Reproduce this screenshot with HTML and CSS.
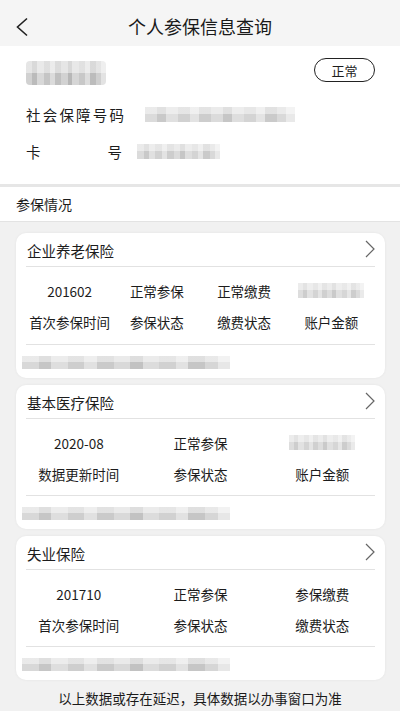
FILE: index.html
```html
<!DOCTYPE html>
<html lang="zh">
<head>
<meta charset="utf-8">
<link rel="stylesheet" href="styles.css">
</head>
<body>
<div class="page">
  <header class="topbar">
    <svg class="back" width="14" height="20" viewBox="0 0 14 20"><path d="M12 1.5 L2.5 10 L12 18.5" fill="none" stroke="#222" stroke-width="1.6"/></svg>
    <h1 class="title">个人参保信息查询</h1>
  </header>

  <section class="info">
    <div class="info-top">
      <div class="mosaic m-name"></div>
      <div class="pill">正常</div>
    </div>
    <div class="info-row first-row">
      <span class="info-label">社会保障号码</span>
      <div class="mosaic m-ssn"></div>
    </div>
    <div class="info-row">
      <span class="info-label card-label"><span>卡</span><span>号</span></span>
      <div class="mosaic m-card"></div>
    </div>
  </section>

  <div class="section-head">参保情况</div>

  <main class="cards">
    <div class="card">
      <div class="card-head">
        <span class="card-title">企业养老保险</span>
        <svg class="chev" width="10" height="18" viewBox="0 0 10 18"><path d="M1 1 L9 9 L1 17" fill="none" stroke="#666" stroke-width="1.2"/></svg>
      </div>
      <div class="grid g4">
        <span class="val">201602</span><span class="val">正常参保</span><span class="val">正常缴费</span><span class="val"><span class="mosaic m-amt"></span></span>
        <span class="lab">首次参保时间</span><span class="lab">参保状态</span><span class="lab">缴费状态</span><span class="lab">账户金额</span>
      </div>
      <div class="card-foot"><div class="mosaic m-foot"></div></div>
    </div>

    <div class="card">
      <div class="card-head">
        <span class="card-title">基本医疗保险</span>
        <svg class="chev" width="10" height="18" viewBox="0 0 10 18"><path d="M1 1 L9 9 L1 17" fill="none" stroke="#666" stroke-width="1.2"/></svg>
      </div>
      <div class="grid g3">
        <span class="val">2020-08</span><span class="val">正常参保</span><span class="val"><span class="mosaic m-amt"></span></span>
        <span class="lab">数据更新时间</span><span class="lab">参保状态</span><span class="lab">账户金额</span>
      </div>
      <div class="card-foot"><div class="mosaic m-foot"></div></div>
    </div>

    <div class="card">
      <div class="card-head">
        <span class="card-title">失业保险</span>
        <svg class="chev" width="10" height="18" viewBox="0 0 10 18"><path d="M1 1 L9 9 L1 17" fill="none" stroke="#666" stroke-width="1.2"/></svg>
      </div>
      <div class="grid g3">
        <span class="val">201710</span><span class="val">正常参保</span><span class="val">参保缴费</span>
        <span class="lab">首次参保时间</span><span class="lab">参保状态</span><span class="lab">缴费状态</span>
      </div>
      <div class="card-foot"><div class="mosaic m-foot"></div></div>
    </div>
  </main>

  <p class="note">以上数据或存在延迟，具体数据以办事窗口为准</p>
</div>
</body>
</html>
```
FILE: styles.css
```css
* { box-sizing: border-box; }
html, body { margin: 0; padding: 0; }
body {
  background: #f1f1f1;
  font-family: "Noto Sans CJK SC", "Noto Sans", sans-serif;
  color: #1c1c1c;
}
.page { width: 400px; height: 711px; overflow: hidden; }

.topbar {
  height: 46px;
  background: #f5f5f5;
  display: flex;
  align-items: center;
  justify-content: center;
  position: relative;
}
.back { position: absolute; left: 15px; top: 17px; }
.title { margin: 0; font-size: 18px; font-weight: 400; line-height: 1; padding-top: 5px; color: #1a1a1a; }

.info {
  background: #fff;
  padding: 13px 25px 0 26px;
  height: 141px;
  border-bottom: 3px solid #e6e6e6;
}
.info-top { display: flex; justify-content: space-between; align-items: center; height: 26px; }
.pill {
  width: 61px; height: 24px;
  border: 1.3px solid #222;
  border-radius: 12px;
  font-size: 13px;
  display: flex; align-items: center; justify-content: center;
  margin-top: -4px;
}
.info-row { display: flex; align-items: center; height: 37px; }
.first-row { margin-top: 11px; }
.info-label { font-size: 14.5px; letter-spacing: 2.2px; width: 112px; white-space: nowrap; }
.card-label { display: flex; justify-content: space-between; width: 96px; letter-spacing: 0; margin-right: 15px; }

.mosaic {
  display: block;
  background:
    linear-gradient(180deg, rgba(255,255,255,0.45) 0 50%, rgba(255,255,255,0) 50% 100%),
    linear-gradient(90deg,
      #cfcfcf 0 8%, #b8b8b8 8% 14%, #d6d6d6 14% 22%, #c2c2c2 22% 30%, #dadada 30% 36%,
      #bdbdbd 36% 44%, #d0d0d0 44% 52%, #b4b4b4 52% 58%, #d4d4d4 58% 66%, #c6c6c6 66% 74%,
      #dcdcdc 74% 80%, #b9b9b9 80% 88%, #cdcdcd 88% 94%, #e2e2e2 94% 100%);
}
.m-name { width: 80px; height: 24px; border-radius: 4px; opacity: 0.95; margin-top: 2px; }
.m-ssn { width: 150px; height: 15px; opacity: 0.75; margin-left: 7px; }
.m-card { width: 83px; height: 15px; opacity: 0.75; }

.section-head {
  background: #fff;
  height: 35px;
  padding-left: 16px;
  font-size: 14px;
  display: flex; align-items: center;
  border-bottom: 1px solid #e3e3e3;
}

.cards { padding: 11px 15px 0 16px; display: flex; flex-direction: column; gap: 7px; }
.card {
  background: #fff;
  border-radius: 10px;
  padding: 0 10px;
  box-shadow: 0 0 3px rgba(0,0,0,0.06);
}
.card-head {
  height: 34px;
  display: flex; justify-content: space-between; align-items: flex-start;
  border-bottom: 1px solid #e2e2e2;
  padding: 8px 0 0 1px;
}
.card-title { font-size: 14.5px; line-height: 20px; }
.chev { margin: -1px 0 0 0; }

.grid { display: grid; padding: 8px 0 7px; border-bottom: 1px solid #e2e2e2; }
.g4 { grid-template-columns: repeat(4, 1fr); }
.g3 { grid-template-columns: repeat(3, 1fr); margin: 0 -8px; padding-left: 0; padding-right: 0; border-bottom: none; position: relative; }
.g3::after { content: ""; position: absolute; left: 8px; right: 8px; bottom: 0; border-bottom: 1px solid #e2e2e2; }
.val, .lab {
  height: 31px;
  display: flex; align-items: center; justify-content: center;
  font-size: 13.5px; white-space: nowrap;
}
.m-amt { width: 66px; height: 15px; opacity: 0.7; }
.card-foot { height: 33px; padding-top: 11px; }
.m-foot { width: 208px; height: 13px; margin-left: -4px; opacity: 0.8; }

.note {
  margin: 8px 0 0;
  text-align: center;
  font-size: 13.5px;
  line-height: 20px;
  color: #1a1a1a;
}
```
